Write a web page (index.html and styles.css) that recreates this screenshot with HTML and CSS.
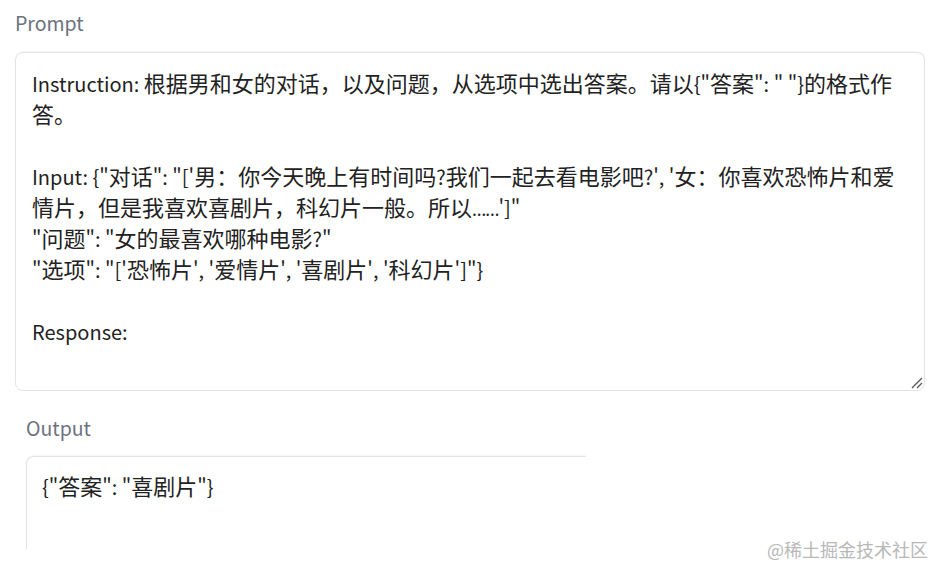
FILE: index.html
```html
<!DOCTYPE html>
<html lang="zh-CN">
<head>
  <meta charset="UTF-8" />
  <title>Prompt</title>
  <link rel="stylesheet" href="styles.css">
</head>
<body>
  <div class="page">
    <div class="field prompt">
      <div class="label">Prompt</div>
      <div class="box">
        <p>Instruction: <span class="zh">根据男和女的对话，以及问题，从选项中选出答案。请以</span>{"<span class="zh">答案</span>": " "}<span class="zh">的格式作答。</span></p>
        <p class="blank"></p>
        <p>Input: {"<span class="zh">对话</span>": "['<span class="zh">男：你今天晚上有时间吗</span>?<span class="zh">我们一起去看电影吧</span>?', '<span class="zh">女：你喜欢恐怖片和爱情片，但是我喜欢喜剧片，科幻片一般。所以</span><span class="dots">……</span>']"</p>
        <p>"<span class="zh">问题</span>": "<span class="zh">女的最喜欢哪种电影</span>?"</p>
        <p>"<span class="zh">选项</span>": "['<span class="zh">恐怖片</span>', '<span class="zh">爱情片</span>', '<span class="zh">喜剧片</span>', '<span class="zh">科幻片</span>']"}</p>
        <p class="blank"></p>
        <p>Response:</p>
        <svg class="grip" width="12" height="12" viewBox="0 0 12 12">
          <path d="M1 11 L11 1 M6 11 L11 6" stroke="#555" stroke-width="1.3" fill="none"/>
        </svg>
      </div>
    </div>

    <div class="field output">
      <div class="label">Output</div>
      <div class="box">
        <p>{"<span class="zh">答案</span>": "<span class="zh">喜剧片</span>"}</p>
      </div>
    </div>
  </div>
  <div class="mark">@稀土掘金技术社区</div>
</body>
</html>
```

FILE: styles.css
```css
body {
  margin: 0;
  background: #fff;
  font-family: "Noto Sans CJK SC", "Noto Sans", sans-serif;
  color: #222;
  width: 935px;
  height: 569px;
  overflow: hidden;
  position: relative;
}

.page {
  padding: 8px 0 0 15px;
}

.label {
  font-size: 19.5px;
  line-height: 30px;
  color: #6b7280;
}

.box {
  position: relative;
  box-sizing: border-box;
  border: 1px solid #e4e4e7;
  border-radius: 8px;
  box-shadow: 0 -1px 2px rgba(0, 0, 0, 0.04);
  background: #fff;
  font-size: 20px;
  line-height: 31px;
}

.box p {
  margin: 0;
}

.box p.blank {
  height: 31px;
}

.zh {
  font-size: 22px;
  line-height: 1;
}

.dots {
  font-family: "Noto Sans", sans-serif;
  font-size: 18px;
  line-height: 1;
  letter-spacing: -1px;
}

.prompt .label {
  margin-bottom: 14px;
}

.prompt .box {
  width: 910px;
  height: 339px;
  padding: 15px 18px 0 16px;
}

.grip {
  position: absolute;
  right: 1px;
  bottom: 1px;
}

.output {
  margin: 22px 0 0 11px;
}

.output .label {
  margin-bottom: 13px;
}

.output .box {
  width: 600px;
  height: 110px;
  padding: 14px 16px 0 15px;
  border-bottom: none;
  border-right: none;
  border-radius: 8px 0 0 0;
  clip-path: inset(-4px 40px 17px -4px);
}

.mark {
  position: absolute;
  right: 7px;
  bottom: 7px;
  font-size: 18px;
  color: #b8b8b8;
}
```
